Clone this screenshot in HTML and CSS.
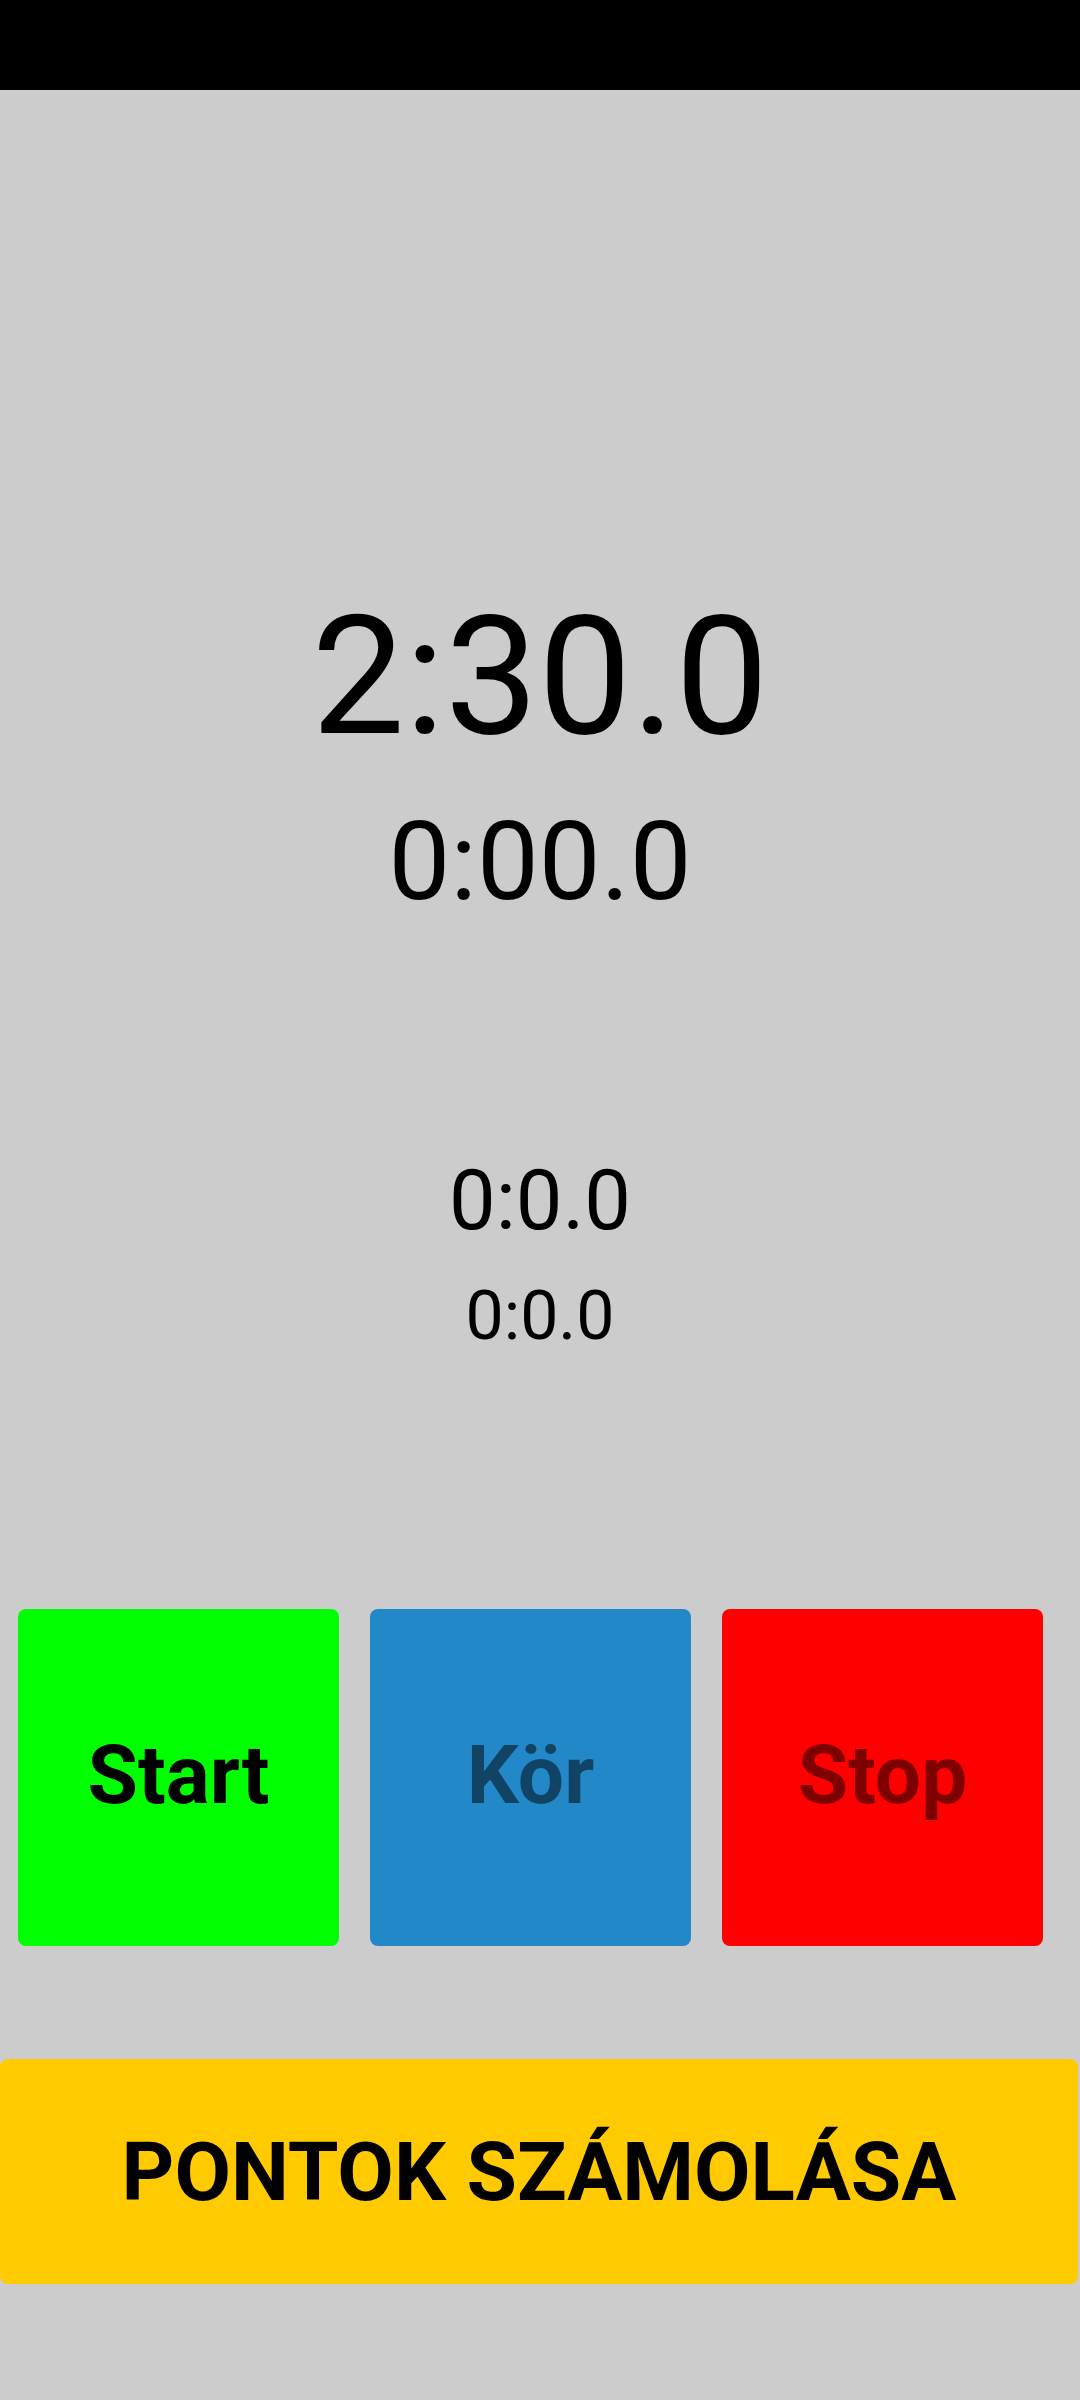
FILE: index.html
```html
<!DOCTYPE html>
<html lang="hu">
<head>
<meta charset="utf-8">
<title>Stopper</title>
<link rel="stylesheet" href="styles.css">
</head>
<body>
<div class="statusbar"></div>
<main class="main">
  <div class="t1">2:30.0</div>
  <div class="t2">0:00.0</div>
  <div class="t3">0:0.0</div>
  <div class="t4">0:0.0</div>
  <div class="controls">
    <button class="btn btn-start">Start</button>
    <button class="btn btn-lap">Kör</button>
    <button class="btn btn-stop">Stop</button>
  </div>
  <button class="score">PONTOK SZÁMOLÁSA</button>
</main>
</body>
</html>
```
FILE: styles.css
```css
html, body {
  margin: 0;
  padding: 0;
}
body {
  width: 1080px;
  height: 2400px;
  background: #cccccc;
  font-family: Roboto, "Liberation Sans", sans-serif;
  color: #000;
  overflow: hidden;
}
.statusbar {
  height: 90px;
  background: #000;
}
.main {
  display: flex;
  flex-direction: column;
  align-items: center;
}
.t1, .t2, .t3, .t4 {
  font-weight: 400;
  line-height: 1;
  white-space: nowrap;
}
.t1 {
  font-size: 166px;
  height: 166px;
  margin-top: 504px;
}
.t2 {
  font-size: 110px;
  height: 110px;
  margin-top: 47px;
}
.t3 {
  font-size: 83px;
  height: 83px;
  margin-top: 242px;
}
.t4 {
  font-size: 68px;
  height: 68px;
  margin-top: 40px;
}
.controls {
  align-self: stretch;
  margin-top: 259px;
  padding-left: 18px;
  display: grid;
  grid-template-columns: 321px 321px 321px;
  column-gap: 31px;
}
.btn {
  height: 337px;
  border: none;
  border-radius: 8px;
  padding: 0 0 6px 0;
  font-family: Roboto, "Liberation Sans", sans-serif;
  font-weight: 700;
  font-size: 82px;
  line-height: 1;
}
.btn-start {
  background: #00ff00;
  color: #000;
}
.btn-lap {
  background: #2288c8;
  color: rgba(0, 0, 0, 0.5);
}
.btn-stop {
  background: #ff0000;
  color: rgba(0, 0, 0, 0.5);
}
.score {
  align-self: flex-start;
  margin-top: 113px;
  width: 1078px;
  height: 225px;
  border: none;
  border-radius: 8px;
  padding: 0;
  background: #ffca00;
  color: #000;
  font-family: Roboto, "Liberation Sans", sans-serif;
  font-weight: 700;
  font-size: 82px;
  line-height: 1;
}
```
